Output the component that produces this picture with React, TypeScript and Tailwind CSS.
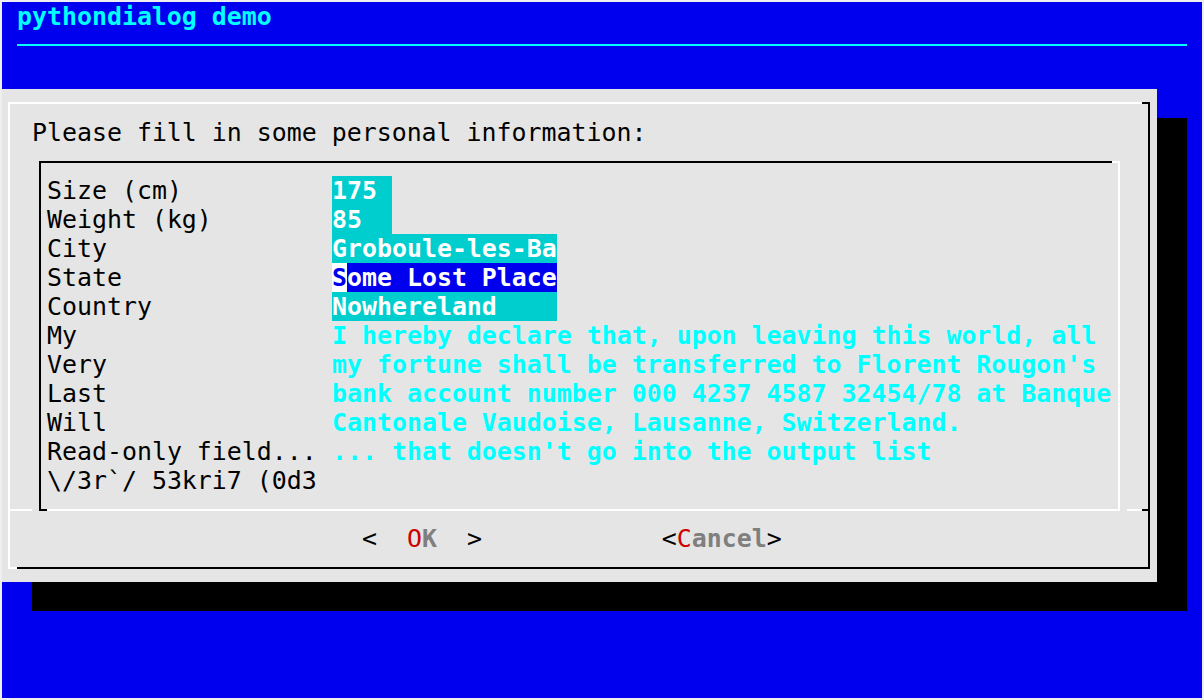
import React from "react";

type Field = {
  label: string;
  value?: string;
  kind?: "edit" | "focus" | "ro";
};

const fields: Field[] = [
  { label: "Size (cm)", value: "175 ", kind: "edit" },
  { label: "Weight (kg)", value: "85  ", kind: "edit" },
  { label: "City", value: "Groboule-les-Ba", kind: "edit" },
  { label: "State", value: "Some Lost Place", kind: "focus" },
  { label: "Country", value: "Nowhereland    ", kind: "edit" },
  { label: "My", value: "I hereby declare that, upon leaving this world, all", kind: "ro" },
  { label: "Very", value: "my fortune shall be transferred to Florent Rougon's", kind: "ro" },
  { label: "Last", value: "bank account number 000 4237 4587 32454/78 at Banque", kind: "ro" },
  { label: "Will", value: "Cantonale Vaudoise, Lausanne, Switzerland.", kind: "ro" },
  { label: "Read-only field...", value: "... that doesn't go into the output list", kind: "ro" },
  { label: "\\/3r`/ 53kri7 (0d3" },
];

const FieldValue: React.FC<{ field: Field }> = ({ field }) => {
  if (!field.value) return null;
  if (field.kind === "edit") {
    return <span className="inline-block h-[29px] bg-[#00cdcd] text-white font-bold">{field.value}</span>;
  }
  if (field.kind === "focus") {
    return (
      <span className="inline-block h-[29px] bg-[#0000ee] text-white font-bold">
        <span className="inline-block h-[29px] bg-white text-[#0000ee]">{field.value.slice(0, 1)}</span>
        {field.value.slice(1)}
      </span>
    );
  }
  return <span className="text-[#00ffff] font-bold">{field.value}</span>;
};

const FormBox: React.FC = () => (
  <div className="ml-[29px] w-[1081px] h-[348px] shrink-0 border-l-2 border-r-2 border-l-black border-r-white">
    <div className="flex h-[2px]">
      <div className="w-[1071px] bg-black" />
      <div className="flex-1 bg-white" />
    </div>
    <div className="pt-[13px] pl-[6px]">
      {fields.map((f) => (
        <div key={f.label} className="flex h-[29px] whitespace-pre">
          <span className="w-[285px] shrink-0">{f.label}</span>
          <FieldValue field={f} />
        </div>
      ))}
    </div>
  </div>
);

const Dialog: React.FC = () => (
  <div className="w-[1155px] h-[493px] shrink-0 bg-[#e5e5e5] pt-[13px] pl-[6px] text-black">
    <div className="w-[1142px] h-[467px] flex flex-col border-l-2 border-r-2 border-l-white border-r-black">
      <div className="flex h-[2px] shrink-0">
        <div className="w-[1132px] bg-white" />
        <div className="flex-1 bg-black" />
      </div>
      <div className="h-[14px] shrink-0" />
      <div className="h-[29px] shrink-0 pl-[22px] whitespace-pre">Please fill in some personal information:</div>
      <div className="h-[14px] shrink-0" />
      <FormBox />
      {/* separator above the buttons */}
      <div className="flex h-[2px] shrink-0">
        <div className="w-[22px] bg-white" />
        <div className="w-[7px]" />
        <div className="w-[8px] bg-black" />
        <div className="w-[1073px] bg-white" />
        <div className="w-[7px]" />
        <div className="w-[15px] bg-white" />
        <div className="flex-1 bg-black" />
      </div>
      <div className="h-[13px] shrink-0" />
      <div className="h-[29px] shrink-0 pl-[352px] whitespace-pre">
        <span>{"<  "}</span>
        <span className="text-[#cd0000]">O</span>
        <span className="text-[#7f7f7f] font-bold">K</span>
        <span>{"  >"}</span>
        <span>{"            "}</span>
        <span>{"<"}</span>
        <span className="text-[#cd0000]">C</span>
        <span className="text-[#7f7f7f] font-bold">ancel</span>
        <span>{">"}</span>
      </div>
      <div className="h-[14px] shrink-0" />
      <div className="flex h-[2px] shrink-0">
        <div className="w-[7px] bg-white" />
        <div className="flex-1 bg-black" />
      </div>
    </div>
  </div>
);

const App: React.FC = () => {
  return (
    <div className="w-[1204px] h-[700px] bg-[#efefef] p-[2px] font-['DejaVu_Sans_Mono',monospace] text-[24.9px] leading-[29px]">
      <div className="w-[1200px] h-[696px] bg-[#0000ee] overflow-hidden">
        <div className="h-[29px] pl-[15px] font-bold text-[#00ffff] whitespace-pre">pythondialog demo</div>
        <div className="h-[29px] pt-[13px] pl-[15px]">
          <div className="h-[2px] w-[1170px] bg-[#00ffff]" />
        </div>
        <div className="h-[29px]" />
        <div className="flex">
          <Dialog />
          <div className="mt-[29px] w-[30px] h-[464px] bg-black" />
        </div>
        <div className="ml-[30px] w-[1155px] h-[29px] bg-black" />
      </div>
    </div>
  );
};

export default App;
